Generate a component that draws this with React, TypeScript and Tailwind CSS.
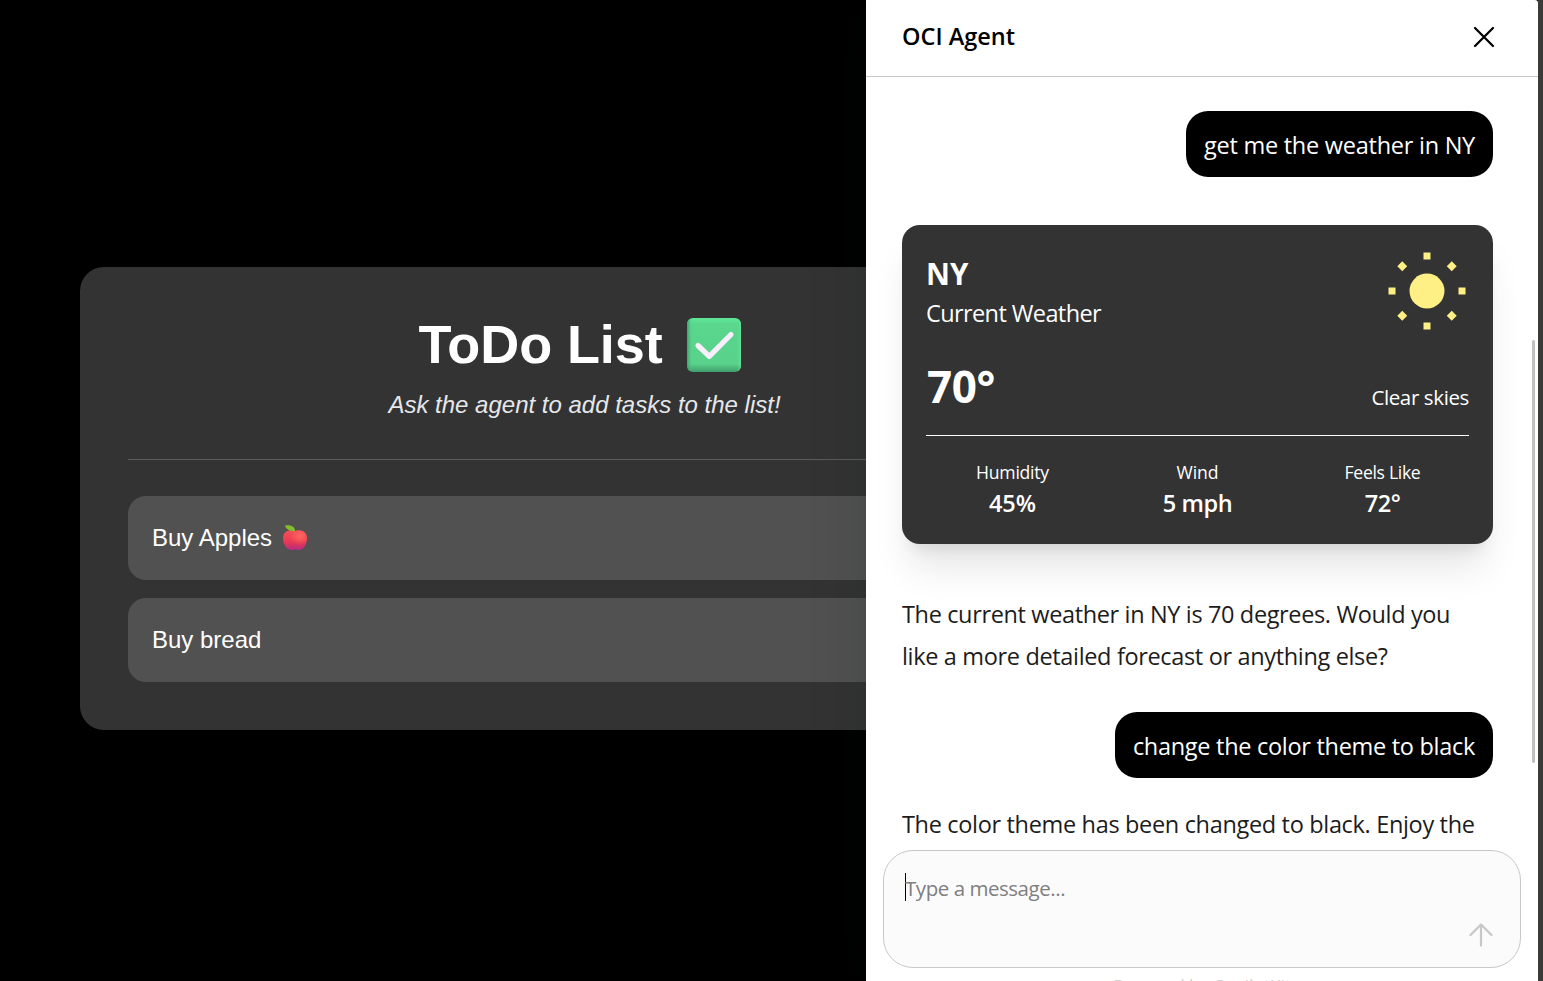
import type { ReactNode } from "react";

function CheckEmoji() {
  return (
    <svg className="h-[54px] w-[54px]" viewBox="0 0 54 54">
      <defs>
        <linearGradient id="chk-v" x1="0" y1="0" x2="0" y2="1">
          <stop offset="0" stopColor="#5fe896" />
          <stop offset="0.12" stopColor="#5ad68d" />
          <stop offset="0.85" stopColor="#59d28b" />
          <stop offset="1" stopColor="#3f9d6b" />
        </linearGradient>
        <linearGradient id="chk-h" x1="0" y1="0" x2="1" y2="0">
          <stop offset="0" stopColor="#3a8f66" stopOpacity="0.75" />
          <stop offset="0.09" stopColor="#4db682" stopOpacity="0" />
          <stop offset="0.92" stopColor="#5fe396" stopOpacity="0" />
          <stop offset="1" stopColor="#62e79a" stopOpacity="0.7" />
        </linearGradient>
      </defs>
      <rect width="54" height="54" rx="6" fill="url(#chk-v)" />
      <rect width="54" height="54" rx="6" fill="url(#chk-h)" />
      <path
        d="M11 27.5 22.3 38.3 44 16.5"
        fill="none"
        stroke="#f9effc"
        strokeWidth="5.2"
        strokeLinecap="round"
        strokeLinejoin="round"
      />
    </svg>
  );
}

function AppleEmoji() {
  return (
    <svg className="h-[26px] w-[26px]" viewBox="0 0 26 26">
      <defs>
        <linearGradient id="apl-v" x1="0" y1="0" x2="0" y2="1">
          <stop offset="0" stopColor="#f2505a" />
          <stop offset="0.5" stopColor="#ec3d52" />
          <stop offset="0.75" stopColor="#d4335f" />
          <stop offset="1" stopColor="#b52b8e" />
        </linearGradient>
        <radialGradient id="apl-r" cx="0.7" cy="0.3" r="0.45">
          <stop offset="0" stopColor="#ff6a5e" />
          <stop offset="1" stopColor="#ff5a5a" stopOpacity="0" />
        </radialGradient>
      </defs>
      <path
        d="M13 6.100C15 5.200 18 5 20.700 6c2.900 1.200 4.300 3.800 4.300 7.200 0 5.500-2.500 9.700-6.200 11.300-2 .8-4 .5-5.800.1-1.800.4-3.800.7-5.800-.1C3.500 22.900 1 18.700 1 13.200 1 9.800 2.400 7.200 5.300 6 8 5 11 5.200 13 6.100Z"
        fill="url(#apl-v)"
      />
      <path
        d="M13 6.100C15 5.200 18 5 20.700 6c2.900 1.200 4.300 3.800 4.300 7.200 0 5.500-2.500 9.700-6.200 11.300-2 .8-4 .5-5.800.1-1.800.4-3.800.7-5.800-.1C3.500 22.900 1 18.700 1 13.200 1 9.800 2.400 7.200 5.300 6 8 5 11 5.200 13 6.100Z"
        fill="url(#apl-r)"
      />
      <path d="M2.900.6C7.500-.1 12.600.4 13.200 6.200 8.600 6.300 4.500 5.400 2.900.6Z" fill="#83bd2a" />
    </svg>
  );
}

function Sun() {
  return (
    <svg className="h-[84px] w-[84px]" viewBox="0 0 24 24">
      <circle cx="12" cy="12" r="5" fill="#fff085" />
      <path
        d="M12 1v2M12 21v2M1 12h2M21 12h2M4.220 4.220l1.420 1.420M18.360 18.360l1.420 1.420M4.220 19.780l1.420-1.420M18.360 5.640l1.420-1.420"
        stroke="#fff085"
        strokeWidth="2"
      />
    </svg>
  );
}

function Task({ children }: { children: ReactNode }) {
  return (
    <li className="flex h-[84px] items-center rounded-[18px] bg-[#515151] px-6 text-2xl leading-9 text-white">
      {children}
    </li>
  );
}

function UserBubble({ children }: { children: ReactNode }) {
  return (
    <div className="self-end whitespace-nowrap rounded-[22px] bg-black px-[18px] pb-[11px] pt-[13px] text-[23.5px] leading-[42px] text-white">
      {children}
    </div>
  );
}

function Stat({ label, children }: { label: ReactNode; children: ReactNode }) {
  return (
    <div className="text-center">
      <p className="text-[17.6px] leading-6">{label}</p>
      <p className="pt-[2px] text-[23.5px] font-semibold leading-[34px]">{children}</p>
    </div>
  );
}

export default function App() {
  return (
    <div className="relative h-[981px] w-[1543px] overflow-hidden bg-black">
      <main className="pl-20 pt-[267px] font-['Liberation_Sans',sans-serif]">
        <section className="w-[1009px] rounded-3xl bg-[#333333] p-12">
          <h1 className="flex h-[60px] items-center justify-center text-[54px] font-bold leading-[60px] text-white">
            <span className="pb-[2px] tracking-[-0.1px]">ToDo List</span>
            <span className="ml-[24px] mr-[10px]">
              <CheckEmoji />
            </span>
          </h1>
          <p className="mt-3 text-center text-2xl italic leading-9 text-gray-200">
            Ask the agent to add tasks to the list!
          </p>
          <hr className="mt-9 border-t border-[#5c5c5c]" />
          <ul className="mt-9 flex flex-col gap-[18px]">
            <Task>
              <span>Buy Apples</span>
              <span className="ml-[10px]">
                <AppleEmoji />
              </span>
            </Task>
            <Task>Buy bread</Task>
          </ul>
        </section>
      </main>

      <aside className="absolute inset-y-0 right-[5px] flex w-[672px] flex-col overflow-hidden rounded-tr-[3px] bg-white font-['Open_Sans','Noto_Sans',sans-serif] shadow-[0_8px_60px_rgba(17,24,39,0.16)]">
        <header className="flex h-[77px] shrink-0 items-center justify-between border-b border-[#c8c8c8] pb-[3px] pl-9 pr-9">
          <h2 className="pb-[2px] text-[23.5px] font-semibold leading-9 text-black">OCI Agent</h2>
          <svg className="h-9 w-9" viewBox="0 0 24 24" fill="none" stroke="#000" strokeWidth="1.5" strokeLinecap="round">
            <path d="M6 18 18 6M6 6l12 12" />
          </svg>
        </header>

        <div className="flex h-[773px] shrink-0 flex-col overflow-hidden pl-9 pr-[45px] pt-[34px] text-[#1c1c1c]">
          <UserBubble>
            <span className="tracking-[-0.25px]">get me the weather in NY</span>
          </UserBubble>

          <div className="mt-12 h-[319px] shrink-0 rounded-[18px] bg-[#333333] p-6 text-white shadow-[0_30px_37px_-7px_rgba(0,0,0,0.1),0_12px_15px_-9px_rgba(0,0,0,0.1)]">
            <div className="flex h-[84px] items-center justify-between">
              <div className="pt-[2px]">
                <h3 className="text-[29.5px] font-bold leading-[42px]">NY</h3>
                <p className="text-[23.5px] leading-9 tracking-[-0.6px]">Current Weather</p>
              </div>
              <Sun />
            </div>
            <div className="mt-6 flex items-end justify-between">
              <p className="pl-px pt-[4px] text-[44px] font-bold leading-[50px] tracking-[-0.4px]">70°</p>
              <p className="text-[20.5px] leading-[28px] tracking-[-0.37px]">Clear skies</p>
            </div>
            <div className="mt-6 grid grid-cols-3 gap-3 border-t border-white pt-6">
              <Stat label={<span className="tracking-[-0.25px]">Humidity</span>}>45%</Stat>
              <Stat label={<span className="tracking-[-0.1px]">Wind</span>}>
                <span className="tracking-[-0.45px]">5 mph</span>
              </Stat>
              <Stat label={<span className="tracking-[-0.32px]">Feels Like</span>}>
                <span className="tracking-[-0.4px]">72°</span>
              </Stat>
            </div>
          </div>

          <p className="mt-[49px] whitespace-nowrap text-[23.5px] leading-[42px]">
            <span className="tracking-[-0.36px]">The current weather in NY is 70 degrees. Would you</span>
            <br />
            <span className="tracking-[-0.34px]">like a more detailed forecast or anything else?</span>
          </p>

          <div className="mt-[35px] flex flex-col">
            <UserBubble>
              <span className="tracking-[-0.29px]">change the color theme to black</span>
            </UserBubble>
          </div>

          <p className="mt-[25px] whitespace-nowrap text-[23.5px] leading-[42px] tracking-[-0.33px]">
            The color theme has been changed to black. Enjoy the
          </p>
        </div>

        <div className="ml-[17px] flex h-[118px] w-[638px] shrink-0 justify-between rounded-[30px] border border-[#c8c8c8] bg-[#fbfbfb] pl-[21px] pr-[21px]">
          <div className="mt-[22px] flex h-7 items-center">
            <span className="h-7 w-px bg-black" />
            <span className="-ml-px pt-px text-[20.5px] leading-[30px] tracking-[-0.46px] text-[#7f7f7f]">
              Type a message...
            </span>
          </div>
          <svg
            className="mt-[66px] h-9 w-9"
            viewBox="0 0 24 24"
            fill="none"
            stroke="#c8c8c8"
            strokeWidth="1.5"
            strokeLinecap="round"
            strokeLinejoin="round"
          >
            <path d="M12 19V5m0 0-7 7m7-7 7 7" />
          </svg>
        </div>
        <p className="mt-[4px] h-7 shrink-0 text-center text-[17.6px] leading-7 tracking-[-0.15px] text-[#d0d0d0]">
          Powered by CopilotKit
        </p>

        <span className="absolute left-[666px] top-[340px] h-[423px] w-[3px] rounded-full bg-[#c1c1c1]" />
      </aside>
      <div className="absolute inset-y-0 right-0 w-[5px] bg-[#3b3b3a]" />
    </div>
  );
}
